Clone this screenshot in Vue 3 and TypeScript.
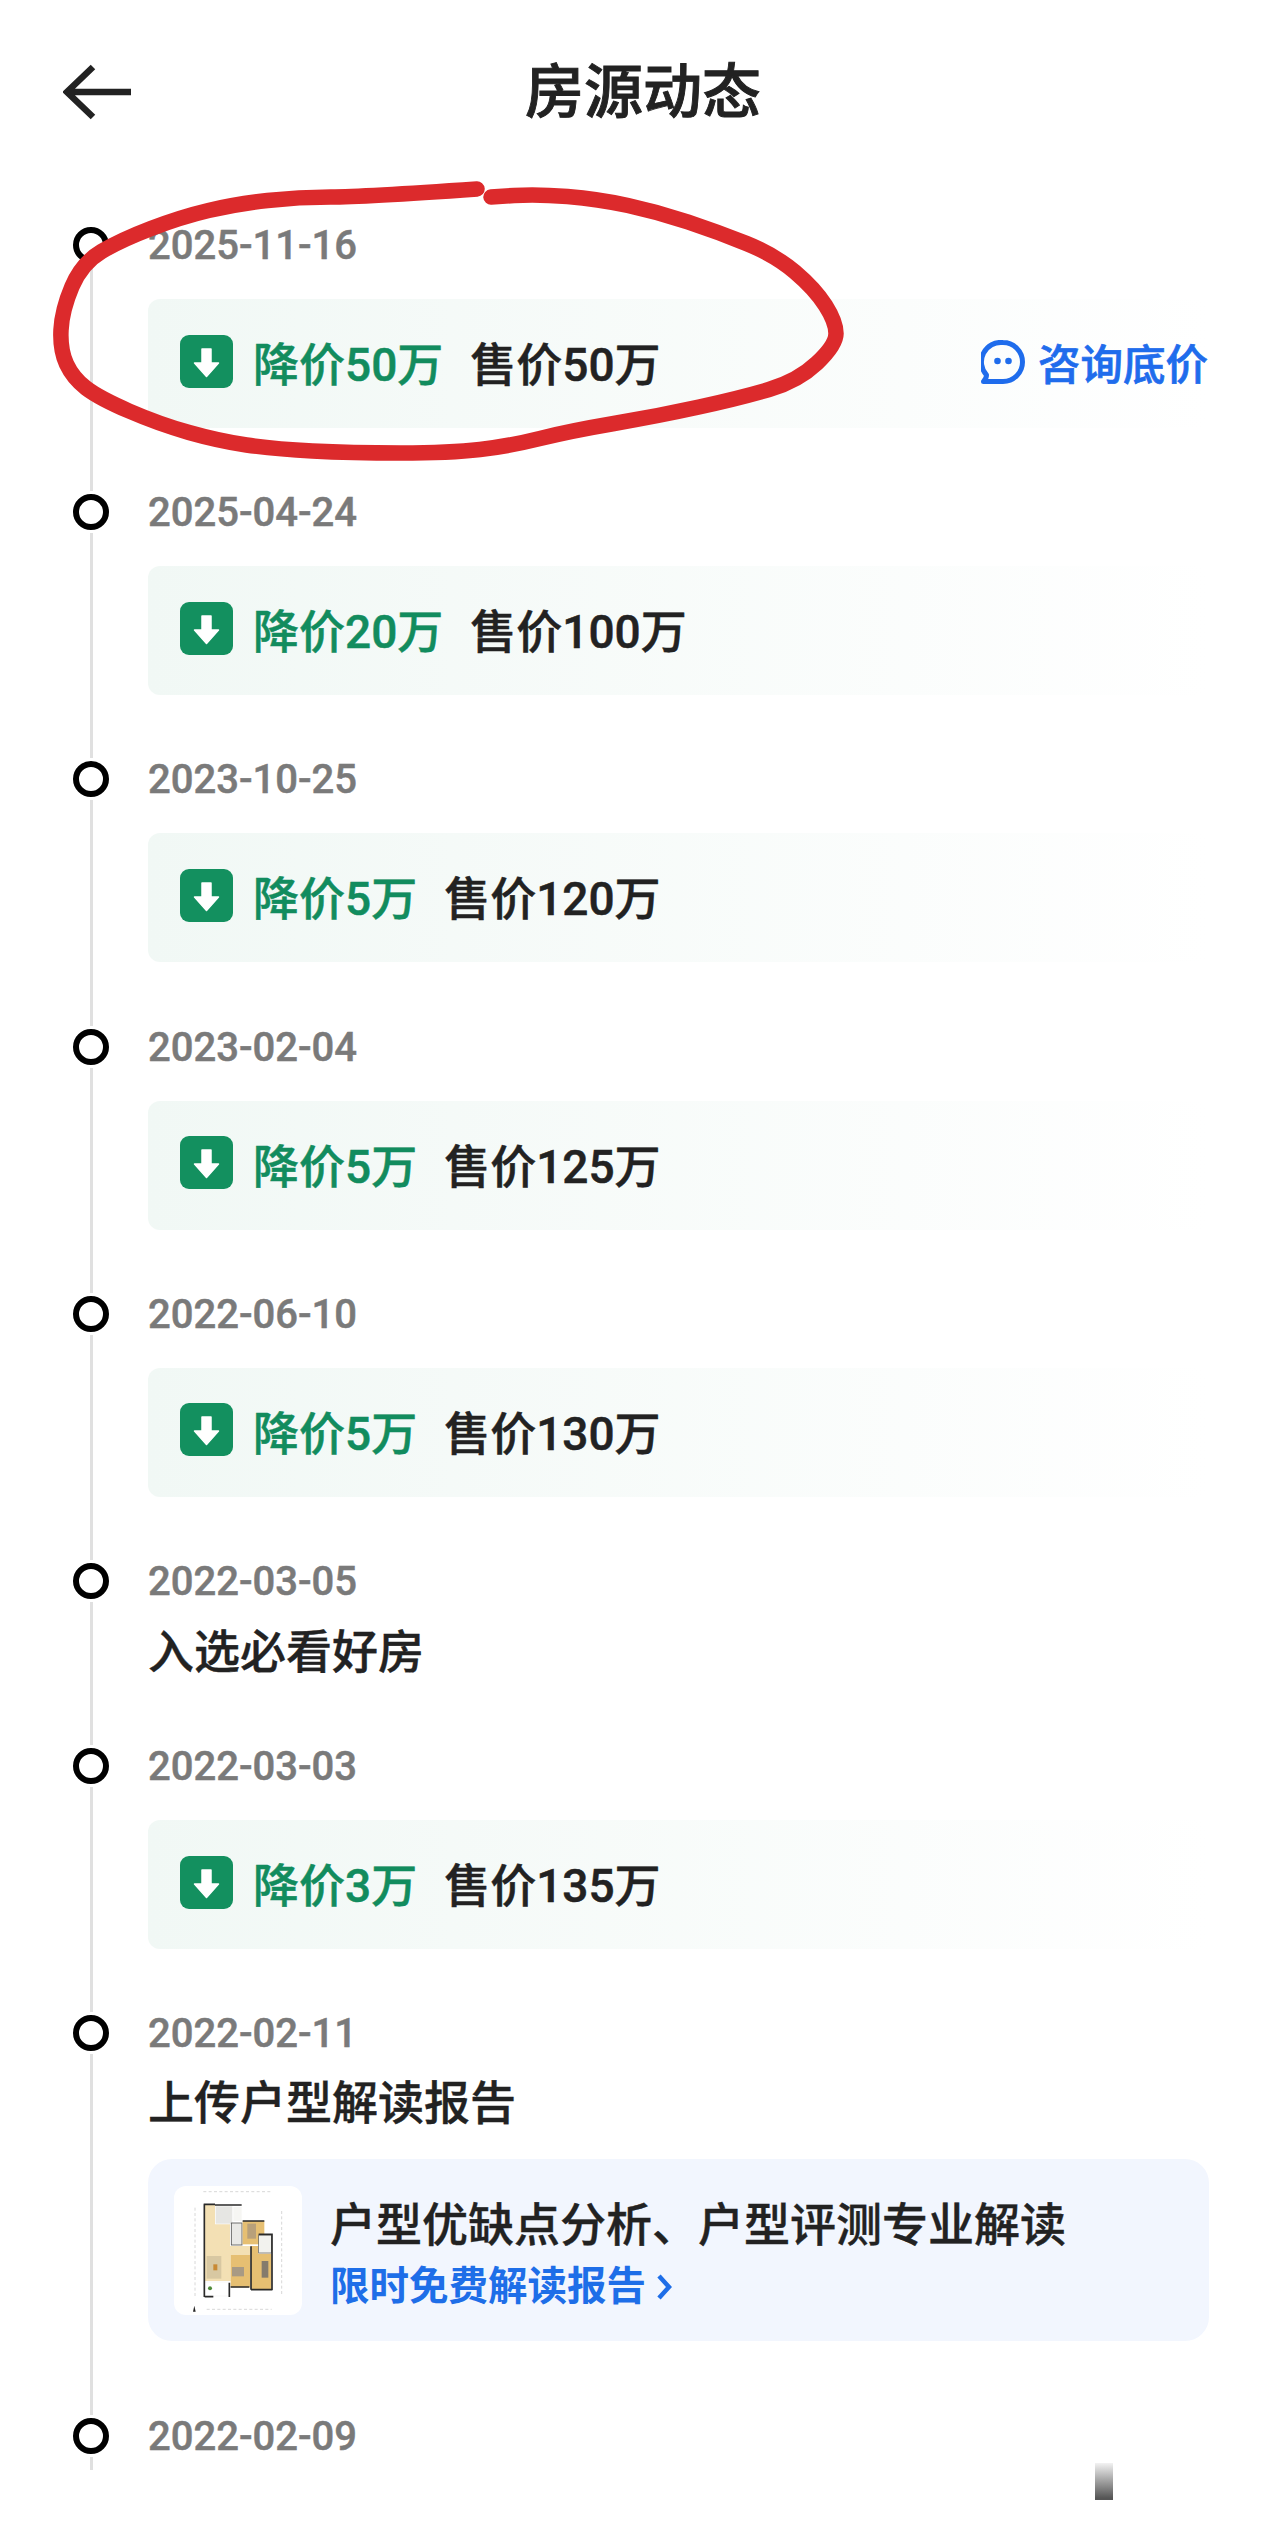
<script setup lang="ts">
type Row = {
  date: string
  drop?: string
  price?: string
  text?: string
  report?: boolean
  consult?: boolean
}

const rows: Row[] = [
  { date: '2025-11-16', drop: '降价50万', price: '售价50万', consult: true },
  { date: '2025-04-24', drop: '降价20万', price: '售价100万' },
  { date: '2023-10-25', drop: '降价5万', price: '售价120万' },
  { date: '2023-02-04', drop: '降价5万', price: '售价125万' },
  { date: '2022-06-10', drop: '降价5万', price: '售价130万' },
  { date: '2022-03-05', text: '入选必看好房' },
  { date: '2022-03-03', drop: '降价3万', price: '售价135万' },
  { date: '2022-02-11', text: '上传户型解读报告', report: true },
  { date: '2022-02-09' },
]

// hand drawn ring, points read off the screenshot
const ringPts: [number, number][] = [
  [477, 189], [362, 197], [299, 197], [236, 204], [181, 217], [121, 240], [82, 263], [62, 310],
  [60, 350], [73, 378], [99, 398], [159, 424], [219, 441], [274, 449], [351, 453], [450, 453],
  [510, 446], [570, 431], [658, 416], [740, 398], [798, 381], [836, 345], [836, 322], [815, 289],
  [775, 255], [718, 232], [658, 212], [598, 199], [537, 194], [491, 197],
]

function smooth(pts: [number, number][]) {
  let d = `M${pts[0][0]} ${pts[0][1]}`
  for (let i = 1; i < pts.length - 1; i++) {
    const mx = (pts[i][0] + pts[i + 1][0]) / 2
    const my = (pts[i][1] + pts[i + 1][1]) / 2
    d += `Q${pts[i][0]} ${pts[i][1]} ${mx} ${my}`
  }
  const last = pts[pts.length - 1]
  return d + `L${last[0]} ${last[1]}`
}

const ringPath = smooth(ringPts)
</script>

<template>
  <div class="page">
    <header class="top">
      <svg class="back" width="70" height="56" viewBox="0 0 70 56">
        <path d="M3 28H68M30 3L4 28L30 53" fill="none" stroke="#222" stroke-width="6.5" stroke-linejoin="miter" />
      </svg>
      <h1>房源动态</h1>
      <span></span>
    </header>

    <ul class="timeline">
      <li v-for="r in rows" :key="r.date" class="item" :class="{ plain: r.text && !r.report, rep: r.report, end: !r.text && !r.drop }">
        <i class="dot"></i>
        <div class="date">{{ r.date }}</div>

        <div v-if="r.text" class="note">{{ r.text }}</div>

        <div v-if="r.drop" class="card">
          <svg class="down" width="53" height="53" viewBox="0 0 53 53">
            <rect width="53" height="53" rx="9" fill="#13905f" />
            <path d="M22 14h9v14h7.5L26.5 41.500L14.500 28H22z" fill="#fff" stroke="#fff" stroke-width="1.500" stroke-linejoin="round" />
          </svg>
          <span class="drop">{{ r.drop }}</span>
          <span class="price">{{ r.price }}</span>
          <a v-if="r.consult" class="consult">
            <svg width="44" height="44" viewBox="0 0 44 44">
              <path d="M22 2.500a19.500 19.500 0 0 1 0 39H2.500c2-2 3-4 3-6.500A19.500 19.500 0 0 1 22 2.500z" fill="none" stroke="#1f6cec" stroke-width="5" stroke-linejoin="round" />
              <circle cx="16.500" cy="21" r="3.300" fill="#1f6cec" />
              <circle cx="27.500" cy="21" r="3.300" fill="#1f6cec" />
            </svg>
            咨询底价
          </a>
        </div>

        <div v-if="r.report" class="report">
          <div class="thumb">
            <svg width="128" height="129" viewBox="12 15 384 387">
              <path d="M105 72H135V130H180V195H240V222H182V300H105Z" fill="#f3e0b4" />
              <rect x="137" y="76" width="50" height="52" fill="#e6e6e3" />
              <rect x="190" y="78" width="25" height="42" fill="#f6f6f3" />
              <rect x="184" y="126" width="32" height="66" fill="#e9e9e6" stroke="#555" stroke-width="2.500" />
              <rect x="218" y="120" width="65" height="70" fill="#e6bf72" />
              <rect x="232" y="128" width="26" height="45" fill="#b8a07a" />
              <path d="M243 195H265V218H305V325H243Z" fill="#e6bf72" />
              <rect x="182" y="222" width="58" height="97" fill="#e6bf72" />
              <rect x="266" y="162" width="38" height="54" fill="#f2f2ee" stroke="#555" stroke-width="2" />
              <rect x="186" y="258" width="36" height="28" fill="#a89a84" />
              <rect x="275" y="240" width="20" height="50" fill="#857b6c" />
              <rect x="110" y="225" width="44" height="68" fill="#d8c8a2" />
              <rect x="130" y="250" width="12" height="18" fill="#c98a35" />
              <rect x="105" y="303" width="74" height="42" fill="#fff" stroke="#e8e8e4" />
              <circle cx="120" cy="322" r="6" fill="#4f8a3a" />
              <path d="M103 70V348M101 70H135M135 72H215M218 120H283M266 160H306V328M243 326H306M243 196V326M238 318H182M104 347H130M178 305V348" fill="none" stroke="#2a2a2a" stroke-width="5" />
              <path d="M100 32H305M110 385H305M75 80V345M335 90V345" fill="none" stroke="#c4c4c4" stroke-width="2" stroke-dasharray="9 7" />
              <path d="M73 374L69 392H77Z" fill="#222" />
            </svg>
          </div>
          <div class="report-txt">
            <div class="report-title">户型优缺点分析、户型评测专业解读</div>
            <div class="report-link">
              限时免费解读报告
              <svg width="16" height="28" viewBox="0 0 16 28"><path d="M3 3L13 14L3 25" fill="none" stroke="#1e6ee8" stroke-width="4.500" /></svg>
            </div>
          </div>
        </div>
      </li>
    </ul>

    <svg class="ring" width="1280" height="500" viewBox="0 0 1280 500">
      <path :d="ringPath" fill="none" stroke="#dc2a2c" stroke-width="15.500" stroke-linecap="round" stroke-linejoin="round" />
    </svg>

    <div class="mark"></div>
  </div>
</template>

<style scoped>
.page {
  position: relative;
  width: 1280px;
  height: 2527px;
  overflow: hidden;
  background: #fff;
  color: #222;
  font-family: Roboto, "Noto Sans CJK SC", sans-serif;
}
.top {
  display: grid;
  grid-template-columns: 1fr auto 1fr;
  align-items: center;
  height: 184px;
  padding-left: 6px;
}
.back { margin-left: 57px; }
.top h1 {
  margin: 0;
  font-size: 59px;
  font-weight: 500;
  line-height: 1;
  -webkit-text-stroke: 0.9px #222;
}
.timeline {
  list-style: none;
  margin: 0;
  padding: 36px 71px 0 148px;
}
.item {
  position: relative;
  padding-bottom: 59.2px;
}
.item.rep { padding-bottom: 70px; }
.item.end { padding-bottom: 9px; }
.dot {
  position: absolute;
  left: -75px;
  top: 7px;
  box-sizing: border-box;
  width: 36px;
  height: 36px;
  border: 6px solid #000;
  border-radius: 50%;
}
.item::after {
  content: "";
  position: absolute;
  left: -58.5px;
  top: 46px;
  bottom: -4px;
  width: 3.5px;
  background: #e0e0e0;
}
.item.end::after { bottom: 0; }
.date {
  height: 50px;
  line-height: 52px;
  font-size: 40px;
  font-weight: 500;
  color: #7a7a7a;
  -webkit-text-stroke: 0.5px #7a7a7a;
}
.note {
  height: 60px;
  margin-top: 16px;
  line-height: 60px;
  font-size: 46px;
  font-weight: 500;
  -webkit-text-stroke: 0.4px #222;
}
.rep .note { margin-top: 14.5px; }
.card {
  display: flex;
  align-items: center;
  box-sizing: border-box;
  height: 129px;
  margin-top: 29px;
  padding: 0 1px 5px 32px;
  border-radius: 12px;
  background: linear-gradient(90deg, #f1f8f5, #fff);
  font-size: 46px;
  font-weight: 500;
  -webkit-text-stroke: 0.5px;
}
.down { flex: none; margin-right: 20px; }
.drop { color: #128c5e; margin-right: 27px; }
.consult {
  display: flex;
  align-items: center;
  gap: 13px;
  margin-left: auto;
  font-size: 42.500px;
  color: #1f6cec;
  -webkit-text-stroke: 0.7px;
}
.consult svg { margin-top: 1px; }
.report {
  display: flex;
  align-items: center;
  height: 182px;
  margin-top: 26.5px;
  padding-left: 26px;
  border-radius: 24px;
  background: #f2f6fe;
}
.thumb {
  flex: none;
  width: 128px;
  height: 129px;
  margin-right: 28px;
  border-radius: 12px;
  background: #fff;
  overflow: hidden;
}
.thumb svg { display: block; }
.report-txt { padding-top: 9px; }
.report-title {
  font-size: 46px;
  font-weight: 500;
  line-height: 56px;
  -webkit-text-stroke: 0.4px #222;
}
.report-link {
  display: flex;
  align-items: center;
  gap: 10px;
  margin-top: 9px;
  font-size: 39.500px;
  font-weight: 700;
  line-height: 50px;
  color: #1e6ee8;
}
.ring {
  position: absolute;
  left: 0;
  top: 0;
  pointer-events: none;
}
.mark {
  position: absolute;
  left: 1095px;
  top: 2463px;
  width: 18px;
  height: 37px;
  background: linear-gradient(180deg, #f2f2f2, #555 95%);
}
</style>
